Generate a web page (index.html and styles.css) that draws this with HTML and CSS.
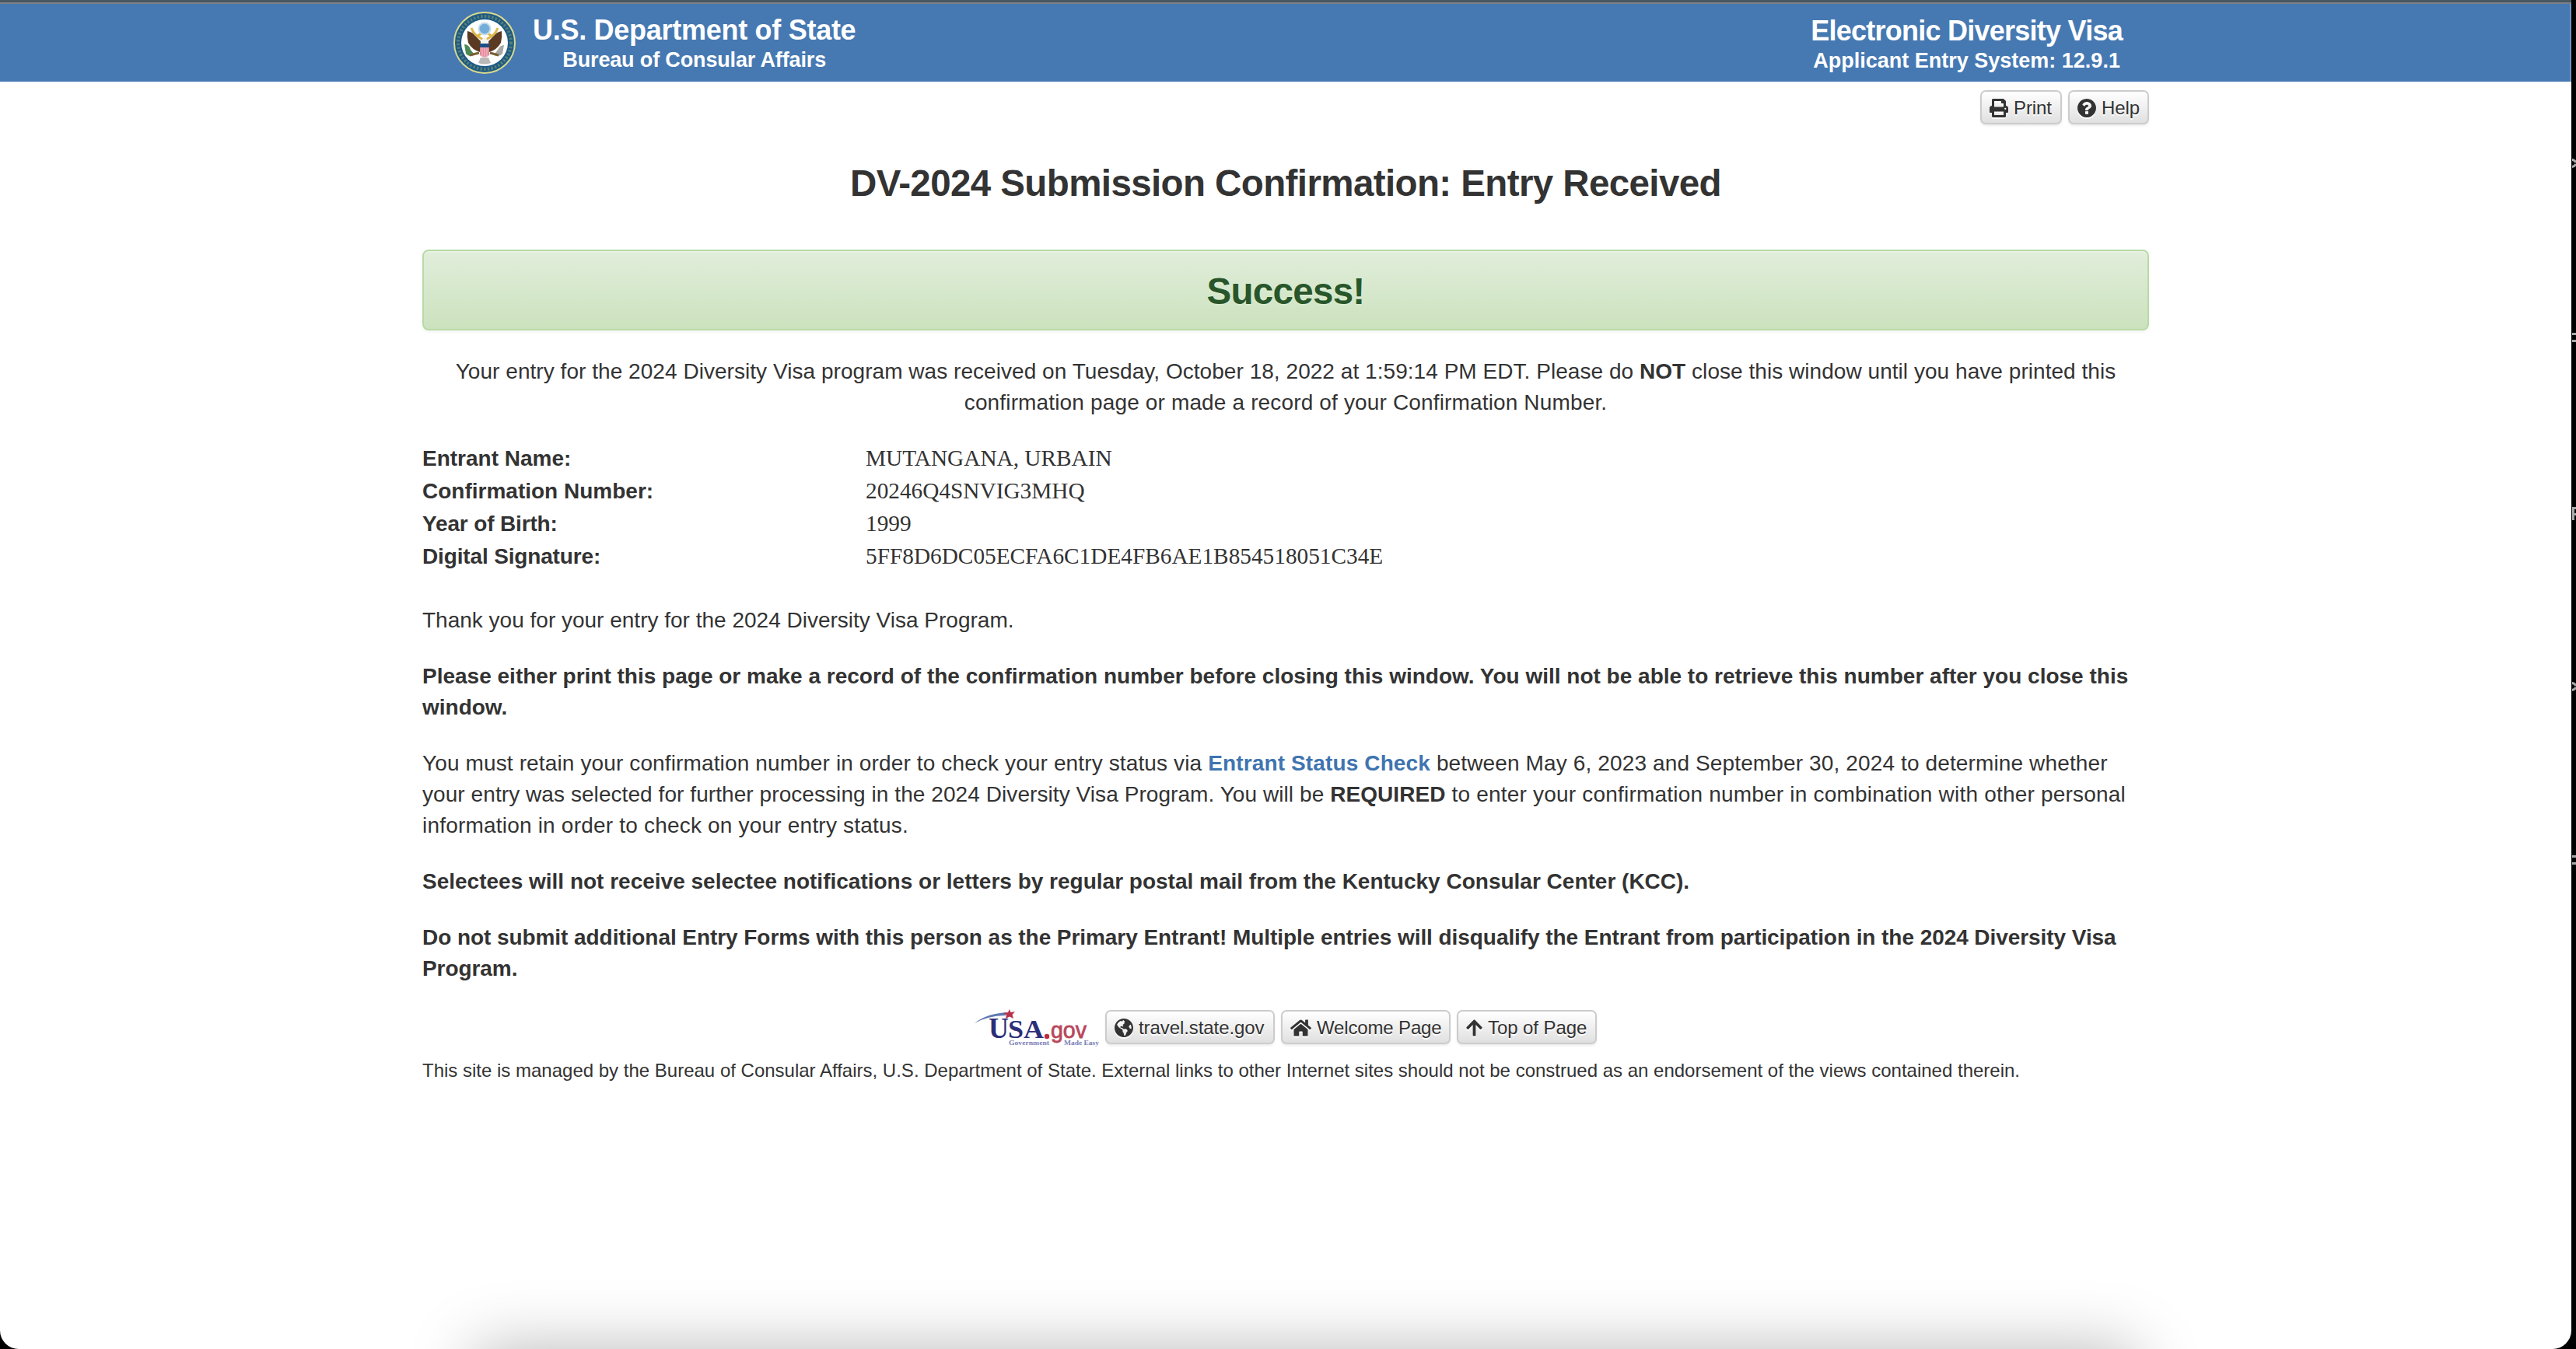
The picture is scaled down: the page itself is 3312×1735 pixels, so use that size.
FILE: index.html
```html
<!DOCTYPE html>
<html lang="en">
<head>
<meta charset="utf-8">
<title>DV-2024 Submission Confirmation</title>
<link rel="stylesheet" href="styles.css">
</head>
<body>
<div class="window">
  <header class="banner">
    <div class="banner-inner">
      <div class="agency">
        <svg class="seal" viewBox="0 0 80 80" aria-hidden="true">
          <circle cx="40" cy="40" r="39" fill="#1d5a85" stroke="#d9d98f" stroke-width="2"/>
          <circle cx="40" cy="40" r="34" fill="none" stroke="#8fa468" stroke-width="4" stroke-dasharray="2.500 2.200" opacity=".5"/>
          <circle cx="40" cy="40" r="30" fill="#fff"/>
          <path d="M18 25 Q25 26 30 33 L35 38 L34 52 Q24 49 19 40 Q17 32 18 25Z M62 25 Q55 26 50 33 L45 38 L46 52 Q56 49 61 40 Q63 32 62 25Z" fill="#5b3a24"/>
          <path d="M23 21 Q27 31 35 34 L38 36 M57 21 Q53 31 45 34 L42 36 M30 32 L37 27 M50 32 L43 27" fill="none" stroke="#dcb84a" stroke-width="3"/>
          <circle cx="40" cy="22" r="8.500" fill="#c9dcea"/>
          <circle cx="40" cy="22" r="6.500" fill="#73aedb"/>
          <path d="M36 37 L40 31 L44 37 V42 H36Z" fill="#f2f2ee"/>
          <path d="M34 41 H46 V46 H34Z" fill="#1d4f86"/>
          <path d="M34 46 H46 V56 Q40 61 34 56Z" fill="#e58b9d"/>
          <path d="M37 46V58M40 46V59M43 46V58" stroke="#f3c3cb" stroke-width="1"/>
          <path d="M14 42 Q20 42 22 49 L27 55 Q21 60 16 54Z" fill="#4b8a55"/>
          <path d="M65 43 Q60 43 57 49 L52 56 Q59 59 63 54Z" fill="#a9a9a5"/>
          <path d="M21 56 L33 53 M47 53 L58 56" stroke="#7a6034" stroke-width="3"/>
          <path d="M35 59 L32 66 Q40 69 48 66 L45 59Z" fill="#b9b9b7"/>
        </svg>
        <div class="agency-text">
          <div class="name name-dept">U.S. Department of State</div>
          <div class="sub sub-bureau">Bureau of Consular Affairs</div>
        </div>
      </div>
      <div class="system-text">
        <div class="name name-edv">Electronic Diversity Visa</div>
        <div class="sub sub-system">Applicant Entry System: 12.9.1</div>
      </div>
    </div>
  </header>

  <main class="container">
    <nav class="tools">
      <a class="btn btn-print"><svg class="icon" viewBox="0 0 512 512"><path d="M448 192V77.250c0-8.490-3.370-16.620-9.370-22.630L393.370 9.370c-6-6-14.140-9.370-22.630-9.370H96C78.330 0 64 14.330 64 32v160c-35.350 0-64 28.650-64 64v112c0 8.840 7.160 16 16 16h48v96c0 17.670 14.330 32 32 32h320c17.670 0 32-14.330 32-32v-96h48c8.840 0 16-7.160 16-16V256c0-35.350-28.650-64-64-64zm-64 256H128v-96h256v96zm0-224H128V64h192v48c0 8.840 7.160 16 16 16h48v96zm48 72c-13.250 0-24-10.750-24-24 0-13.260 10.750-24 24-24s24 10.740 24 24c0 13.250-10.750 24-24 24z"/></svg>Print</a>
      <a class="btn btn-help"><svg class="icon" viewBox="128 128 1536 1536"><path d="M1024 1376v-192q0-14-9-23t-23-9h-192q-14 0-23 9t-9 23v192q0 14 9 23t23 9h192q14 0 23-9t9-23zm256-672q0-88-55.500-163t-138.500-116-170-41q-243 0-371 213-15 24 8 42l132 100q7 6 19 6 16 0 25-12 53-68 86-92 34-24 86-24 48 0 85.500 26t37.500 59q0 38-20 61t-68 45q-63 28-115.500 86.500t-52.500 125.500v36q0 14 9 23t23 9h192q14 0 23-9t9-23q0-19 21.500-49.500t54.500-49.500q32-18 49-28.500t46-35 44.500-48 28-60.500 12.500-81zm384 192q0 209-103 385.500t-279.500 279.500-385.500 103-385.500-103-279.500-279.500-103-385.500 103-385.500 279.500-279.500 385.500-103 385.500 103 279.500 279.500 103 385.500z"/></svg>Help</a>
    </nav>

    <h1 class="title">DV-2024 Submission Confirmation: Entry Received</h1>
    <div class="alert">Success!</div>

    <p class="center"><span class="ls-05">Your entry for the 2024 Diversity Visa program was received on Tuesday, October 18, 2022 at 1:59:14 PM EDT. Please do <b>NOT</b> close this window until you have printed this</span><br><span class="ls-15">confirmation page or made a record of your Confirmation Number.</span></p>

    <dl class="details">
      <dt>Entrant Name:</dt><dd>MUTANGANA, URBAIN</dd>
      <dt>Confirmation Number:</dt><dd>20246Q4SNVIG3MHQ</dd>
      <dt class="ls-neg">Year of Birth:</dt><dd>1999</dd>
      <dt class="ls-neg">Digital Signature:</dt><dd>5FF8D6DC05ECFA6C1DE4FB6AE1B854518051C34E</dd>
    </dl>

    <p>Thank you for your entry for the 2024 Diversity Visa Program.</p>
    <p><b>Please either print this page or make a record of the confirmation number before closing this window. You will not be able to retrieve this number after you close this<br>window.</b></p>
    <p><span class="ls-13">You must retain your confirmation number in order to check your entry status via <a class="link">Entrant Status Check</a> between May 6, 2023 and September 30, 2024 to determine whether</span><br><span class="ls-06">your entry was selected for further processing in the 2024 Diversity Visa Program. You will be <b>REQUIRED</b></span><span class="ls-20"> to enter your confirmation number in combination with other personal<br>information in order to check on your entry status.</span></p>
    <p><b>Selectees will not receive selectee notifications or letters by regular postal mail from the Kentucky Consular Center (KCC).</b></p>
    <p><b class="ls-tight">Do not submit additional Entry Forms with this person as the Primary Entrant! Multiple entries will disqualify the Entrant from participation in the 2024 Diversity Visa<br>Program.</b></p>

    <footer class="footer">
      <div class="footer-links">
        <svg class="usa" viewBox="0 0 160 48" role="img" aria-label="USA.gov">
          <path d="M0 18 Q14 6 41 4 L40 8 Q18 8 0 18Z" fill="#5f78b0"/>
          <g font-family="Liberation Serif, serif" font-weight="bold" fill="#2b2f78">
            <text x="18" y="37" font-size="37" textLength="26" lengthAdjust="spacingAndGlyphs">U</text>
            <text x="43" y="37" font-size="34" textLength="46" lengthAdjust="spacingAndGlyphs">SA</text>
          </g>
          <circle cx="93" cy="35" r="3.200" fill="#c2283f"/>
          <text x="98" y="37" font-size="30" font-family="Liberation Sans, sans-serif" fill="#b8475c" stroke="#b8475c" stroke-width=".8" textLength="46" lengthAdjust="spacingAndGlyphs">gov</text>
          <path d="M45 0 L46.500 4 L52 3 L48.500 7 L50 12 L45 9.500 L40 12 L41 7 L37 5 L43 4Z" fill="#b9304a"/>
          <g font-family="Liberation Serif, serif" font-size="9" font-weight="bold" fill="#7a7eb6">
            <text x="44" y="46" textLength="52" lengthAdjust="spacingAndGlyphs">Government</text>
            <text x="115" y="46" textLength="45" lengthAdjust="spacingAndGlyphs">Made Easy</text>
          </g>
        </svg>
        <a class="btn btn-travel"><svg class="icon" viewBox="0 8 496 496"><path d="M248 8C111.030 8 0 119.030 0 256s111.030 248 248 248 248-111.030 248-248S384.970 8 248 8zm82.290 357.600c-3.900 3.880-7.990 7.950-11.310 11.280-2.990 3-5.100 6.700-6.170 10.710-1.510 5.660-2.730 11.380-4.770 16.870l-17.390 46.850c-13.760 3-28 4.690-42.650 4.690v-27.380c1.690-12.620-7.640-36.260-22.630-51.250-6-6-9.370-14.140-9.370-22.630v-32.010c0-11.640-6.270-22.340-16.460-27.970-14.370-7.950-34.810-19.060-48.810-26.110-11.480-5.780-22.100-13.140-31.650-21.750l-.8-.72a114.792 114.792 0 0 1-18.060-20.740c-9.380-13.770-24.660-36.420-34.590-51.140 20.470-45.500 57.360-82.040 103.200-101.890l24.010 12.010C203.480 89.740 216 82.010 216 70.110v-11.300c7.990-1.290 16.120-2.110 24.390-2.420l28.300 28.300c6.250 6.250 6.250 16.380 0 22.630L264 112l-10.340 10.340c-3.120 3.120-3.120 8.190 0 11.310l4.690 4.690c3.120 3.120 3.120 8.190 0 11.310l-8 8a8.008 8.008 0 0 1-5.660 2.340h-8.990c-2.080 0-4.080.81-5.580 2.270l-9.920 9.650a8.008 8.008 0 0 0-1.580 9.310l15.590 31.190c2.660 5.320-1.210 11.580-7.150 11.580h-5.640c-1.930 0-3.790-.7-5.240-1.960l-9.280-8.060a16.017 16.017 0 0 0-15.550-3.100l-31.170 10.390a11.950 11.950 0 0 0-8.170 11.340c0 4.530 2.560 8.660 6.610 10.690l11.080 5.540c9.410 4.710 19.790 7.160 30.310 7.160s22.590 27.290 32 32h66.750c8.490 0 16.620 3.370 22.630 9.370l13.690 13.690a30.503 30.503 0 0 1 8.930 21.570 46.536 46.536 0 0 1-13.720 32.980zM417 274.250c-5.790-1.450-10.840-5-14.150-9.970l-17.980-26.970a23.970 23.970 0 0 1 0-26.620l19.590-29.380c2.320-3.470 5.500-6.290 9.240-8.150l12.980-6.490C440.200 193.590 448 223.870 448 256c0 8.670-.74 17.160-1.820 25.540L417 274.250z"/></svg>travel.state.gov</a>
        <a class="btn btn-welcome"><svg class="icon icon-home" viewBox="0 0 576 512"><path d="M280.370 148.260L96 300.110V464a16 16 0 0 0 16 16l112.060-.29a16 16 0 0 0 15.920-16V368a16 16 0 0 1 16-16h64a16 16 0 0 1 16 16v95.640a16 16 0 0 0 16 16.050L464 480a16 16 0 0 0 16-16V300L295.670 148.260a12.190 12.190 0 0 0-15.300 0zM571.600 251.470L488 182.560V44.050a12 12 0 0 0-12-12h-56a12 12 0 0 0-12 12v72.610L318.470 43a48 48 0 0 0-61 0L4.340 251.470a12 12 0 0 0-1.600 16.900l25.500 31A12 12 0 0 0 45.150 301l235.220-193.740a12.190 12.190 0 0 1 15.300 0L530.900 301a12 12 0 0 0 16.900-1.600l25.500-31a12 12 0 0 0-1.700-16.930z"/></svg>Welcome Page</a>
        <a class="btn btn-top"><svg class="icon icon-up" viewBox="0 0 448 512"><path d="M34.900 289.500l-22.200-22.200c-9.400-9.400-9.400-24.600 0-33.900L207 39c9.400-9.400 24.600-9.400 33.900 0l194.300 194.300c9.400 9.400 9.400 24.600 0 33.900L413 289.400c-9.500 9.500-25 9.300-34.300-.4L264 168.600V456c0 13.300-10.700 24-24 24h-32c-13.300 0-24-10.700-24-24V168.600L69.200 289.100c-9.300 9.800-24.800 10-34.300.4z"/></svg>Top of Page</a>
      </div>
      <div class="disclaimer">This site is managed by the Bureau of Consular Affairs, U.S. Department of State. External links to other Internet sites should not be construed as an endorsement of the views contained therein.</div>
    </footer>
  </main>
  <div class="dock-shadow"></div>
</div>
<svg class="desktop-edge" viewBox="0 0 5 1735" aria-hidden="true">
  <g fill="none" stroke="#aaa" stroke-width="3">
    <path d="M0 205.500 Q3 205.500 5 209 M0 214.500 Q3 214.500 5 211"/>
    <path d="M0 429.500H5 M0 438.500H5"/>
    <path d="M1.500 652V669 M1 653.500H5 M1 661.500H5"/>
    <path d="M0 878.500 Q3 878.500 5 882 M0 887.500 Q3 887.500 5 884"/>
    <path d="M0 1101.500H5 M0 1110.500H5"/>
  </g>
</svg>
</body>
</html>
```
FILE: styles.css
```css
* { box-sizing: border-box; }

body {
  display: flex;
  gap: 1px;
  margin: 0;
  background: #000;
  color: #333;
  font: 28px/40px "Liberation Sans", Arial, sans-serif;
  overflow: hidden;
}

.window {
  position: relative;
  flex: none;
  width: 3306px;
  height: 1735px;
  background: #fff;
  border-radius: 0 0 24px 24px;
  overflow: hidden;
}

.desktop-edge { flex: none; width: 5px; height: 1735px; }

.banner {
  height: 105px;
  background: #4679b2;
  border-top: 3px solid #485761;
  box-shadow: inset 0 2px 0 #7c8285, inset -2px 0 0 #6d95c3;
  color: #fff;
  font-weight: bold;
}

.banner-inner {
  display: flex;
  justify-content: space-between;
  width: 2220px;
  margin: 0 auto;
  padding: 12px 34px 0 40px;
}

.agency { display: flex; gap: 22px; }
.seal { width: 80px; height: 80px; }
.agency-text, .system-text { text-align: center; white-space: nowrap; }
.agency-text { padding-top: 4px; }
.system-text { padding-top: 5px; }
.name { font-size: 36px; line-height: 40px; }
.name-dept { letter-spacing: -0.28px; }
.name-edv { letter-spacing: -0.75px; }
.sub { font-size: 27px; line-height: 36px; }
.sub-bureau { letter-spacing: -0.15px; }
.sub-system { line-height: 37px; }

.container { width: 2220px; margin: 0 auto; }

.tools {
  display: flex;
  justify-content: flex-end;
  gap: 8px;
  padding-top: 11px;
}

.btn {
  display: flex;
  align-items: center;
  height: 44px;
  padding: 1px 0 0 10px;
  border: 2px solid #ccc;
  border-radius: 7px;
  background: linear-gradient(#fff, #e0e0e0);
  box-shadow: 0 2px 3px rgba(0, 0, 0, 0.08);
  font-size: 24px;
  line-height: 40px;
  letter-spacing: -0.08px;
  text-shadow: 0 2px 0 #fff;
  white-space: nowrap;
}

.icon { width: 24px; height: 24px; margin-right: 7px; fill: #333; filter: drop-shadow(0 2px 0 #fff); }
.icon-home { width: 27px; }
.icon-up { width: 21px; }
.btn-print { width: 105px; }
.btn-help { width: 104px; }
.btn-travel { width: 218px; }
.btn-welcome { width: 218px; letter-spacing: -0.15px; }
.btn-top { width: 180px; }

.title {
  margin: 46px 0 55px;
  font-size: 47.500px;
  line-height: 60px;
  letter-spacing: -0.6px;
  text-align: center;
  white-space: nowrap;
}

.alert {
  height: 104px;
  border: 2px solid #b7dba5;
  border-radius: 8px;
  background: linear-gradient(#e1eedb, #cce2be);
  box-shadow: inset 0 2px 0 rgba(255, 255, 255, 0.25), 0 2px 4px rgba(0, 0, 0, 0.05);
  color: #28562a;
  font-size: 47.500px;
  font-weight: bold;
  line-height: 103px;
  letter-spacing: -0.7px;
  text-align: center;
  text-shadow: 0 2px 0 rgba(255, 255, 255, 0.2);
}

p { margin: 0 0 32px; white-space: nowrap; }
.center { margin: 33px 0 30px; text-align: center; }
.ls-05 { letter-spacing: 0.045px; }
.ls-06 { letter-spacing: 0.07px; }
.ls-13 { letter-spacing: 0.13px; }
.ls-15 { letter-spacing: 0.15px; }
.ls-20 { letter-spacing: 0.2px; }
.ls-neg { letter-spacing: -0.15px; }
.ls-tight { letter-spacing: -0.065px; }

.details {
  display: grid;
  grid-template-columns: 570px 1fr;
  grid-auto-rows: 42px;
  margin: 0 0 42px;
  line-height: 42px;
}
.details dt { padding-top: 1px; font-weight: bold; }
.details dd { margin: 0; font-family: "Liberation Serif", "Times New Roman", serif; font-size: 29.300px; }

.link { color: #3f74b0; font-weight: bold; }

.footer-links {
  display: flex;
  justify-content: center;
  gap: 8px;
  padding-top: 1px;
}
.usa { width: 160px; height: 48px; margin-top: -1px; }

.disclaimer {
  margin-top: 13px;
  font-size: 24px;
  line-height: 36px;
  white-space: nowrap;
}

.dock-shadow {
  position: absolute;
  left: 610px;
  top: 1735px;
  width: 2135px;
  height: 140px;
  box-shadow: 0 0 84px rgba(0, 0, 0, 0.28);
}
```
